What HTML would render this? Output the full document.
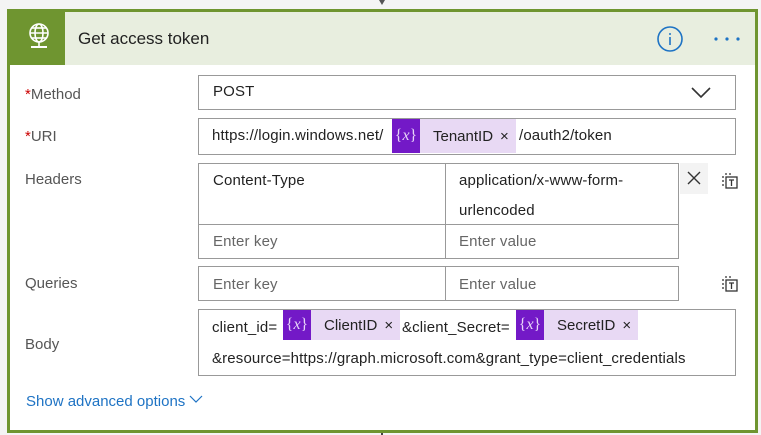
<!DOCTYPE html>
<html><head><meta charset="utf-8"><style>
*{box-sizing:border-box;margin:0;padding:0}
body{width:761px;height:435px;background:#f4f4f4;position:relative;overflow:hidden;font-family:"Liberation Sans",sans-serif;font-size:14px;color:#222}
.a{position:absolute}
.card{left:7px;top:9px;width:751px;height:424px;border:3px solid #6f9530;background:#fff}
.hdr{left:10px;top:12px;width:745px;height:53px;background:#e8eedf}
.ico{left:10px;top:12px;width:55px;height:53px;background:#6f9530}
.lbl{color:#555;font-size:15px}
.req{color:#c00}
.box{border:1px solid #999;background:#fff}
.txt{font-size:15px;letter-spacing:.15px;color:#222;white-space:nowrap}
.ph{color:#666}
.tok{background:#e8d9f4;height:30px;display:flex;align-items:center;white-space:nowrap;font-size:15px}
.tok .p{background:#7319c7;color:#e7d4f8;width:28px;height:100%;display:flex;align-items:center;justify-content:center;font-family:"Liberation Serif",serif;font-size:16px}
.tok .p i{font-style:italic}
.tok .n{padding:0 7px 0 13px}
.tok .x{font-size:15px;padding-right:7px}
</style></head><body>
<div class="a" style="left:379px;top:0;width:6px;height:5px;border-left:3px solid transparent;border-right:3px solid transparent;border-top:5px solid #555"></div>
<div class="a" style="left:381px;top:432px;width:2px;height:3px;background:#444"></div>
<div class="a card"></div>
<div class="a hdr"></div>
<div class="a ico"></div>
<svg class="a" style="left:26px;top:22px" width="26" height="30" viewBox="0 0 26 30" fill="none" stroke="#fff" stroke-width="1.6">
<circle cx="13" cy="11" r="9"/><ellipse cx="13" cy="11" rx="4" ry="9"/><line x1="4" y1="11" x2="22" y2="11"/><line x1="5.5" y1="6" x2="20.5" y2="6"/><line x1="5.5" y1="16" x2="20.5" y2="16"/><line x1="13" y1="20" x2="13" y2="25"/><line x1="5" y1="25" x2="21" y2="25" stroke-width="2"/>
</svg>
<div class="a" style="left:78px;top:29px;font-size:17px;color:#222">Get access token</div>
<svg class="a" style="left:656px;top:26px" width="28" height="26"><circle cx="14" cy="13" r="12" fill="none" stroke="#1e73c4" stroke-width="1.6"/><line x1="14" y1="11" x2="14" y2="19" stroke="#1e73c4" stroke-width="1.6"/><circle cx="14" cy="8" r="1" fill="#1e73c4"/></svg>
<svg class="a" style="left:712px;top:35px" width="30" height="8"><circle cx="4" cy="4" r="1.6" fill="#1e73c4"/><circle cx="15" cy="4" r="1.6" fill="#1e73c4"/><circle cx="26" cy="4" r="1.6" fill="#1e73c4"/></svg>

<div class="a lbl" style="left:25px;top:86px"><span class="req">*</span>Method</div>
<div class="a box" style="left:198px;top:75px;width:538px;height:35px"></div>
<div class="a txt" style="left:213px;top:83px">POST</div>
<svg class="a" style="left:690px;top:86px" width="22" height="14"><polyline points="2,2 11,11 20,2" fill="none" stroke="#333" stroke-width="1.6"/></svg>

<div class="a lbl" style="left:25px;top:128px"><span class="req">*</span>URI</div>
<div class="a box" style="left:198px;top:118px;width:538px;height:37px"></div>
<div class="a txt" style="left:212px;top:127px">https://login.windows.net/</div>
<div class="a tok" style="left:392px;top:119px;height:34px"><span class="p">{<i>x</i>}</span><span class="n">TenantID</span><span class="x">×</span></div>
<div class="a txt" style="left:519px;top:127px">/oauth2/token</div>

<div class="a lbl" style="left:25px;top:171px">Headers</div>
<div class="a box" style="left:198px;top:163px;width:481px;height:96px"></div>
<div class="a" style="left:198px;top:224px;width:481px;height:1px;background:#999"></div>
<div class="a" style="left:445px;top:163px;width:1px;height:96px;background:#999"></div>
<div class="a txt" style="left:213px;top:172px">Content-Type</div>
<div class="a txt" style="left:459px;top:172px">application/x-www-form-</div>
<div class="a txt" style="left:459px;top:202px">urlencoded</div>
<div class="a txt ph" style="left:213px;top:233px">Enter key</div>
<div class="a txt ph" style="left:459px;top:233px">Enter value</div>
<div class="a" style="left:680px;top:163px;width:28px;height:31px;background:#f3f3f3"></div>
<svg class="a" style="left:686px;top:170px" width="16" height="16"><path d="M2 2L14 14M14 2L2 14" stroke="#333" stroke-width="1.4"/></svg>
<svg class="a" style="left:721px;top:172px" width="18" height="18" fill="none" stroke="#333" stroke-width="1.3"><path d="M2 4v2M2 8v2M2 12v2M4 2h2M8 2h2" /><rect x="5" y="5" width="11" height="11"/><path d="M8 8h5M10.5 8v6"/></svg>

<div class="a lbl" style="left:25px;top:275px">Queries</div>
<div class="a box" style="left:198px;top:266px;width:481px;height:35px"></div>
<div class="a" style="left:445px;top:266px;width:1px;height:35px;background:#999"></div>
<div class="a txt ph" style="left:213px;top:276px">Enter key</div>
<div class="a txt ph" style="left:459px;top:276px">Enter value</div>
<svg class="a" style="left:721px;top:275px" width="18" height="18" fill="none" stroke="#333" stroke-width="1.3"><path d="M2 4v2M2 8v2M2 12v2M4 2h2M8 2h2" /><rect x="5" y="5" width="11" height="11"/><path d="M8 8h5M10.5 8v6"/></svg>

<div class="a lbl" style="left:25px;top:336px">Body</div>
<div class="a box" style="left:198px;top:309px;width:538px;height:67px"></div>
<div class="a txt" style="left:212px;top:319px">client_id=</div>
<div class="a tok" style="left:283px;top:310px"><span class="p">{<i>x</i>}</span><span class="n">ClientID</span><span class="x">×</span></div>
<div class="a txt" style="left:402px;top:319px">&amp;client_Secret=</div>
<div class="a tok" style="left:516px;top:310px"><span class="p">{<i>x</i>}</span><span class="n">SecretID</span><span class="x">×</span></div>
<div class="a txt" style="left:212px;top:350px">&amp;resource=https://graph.microsoft.com&amp;grant_type=client_credentials</div>

<div class="a" style="left:26px;top:393px;color:#1e73c4;font-size:15px">Show advanced options</div>
<svg class="a" style="left:189px;top:394px" width="14" height="10"><polyline points="1,2 7,8 13,2" fill="none" stroke="#1e73c4" stroke-width="1.2"/></svg>
</body></html>
